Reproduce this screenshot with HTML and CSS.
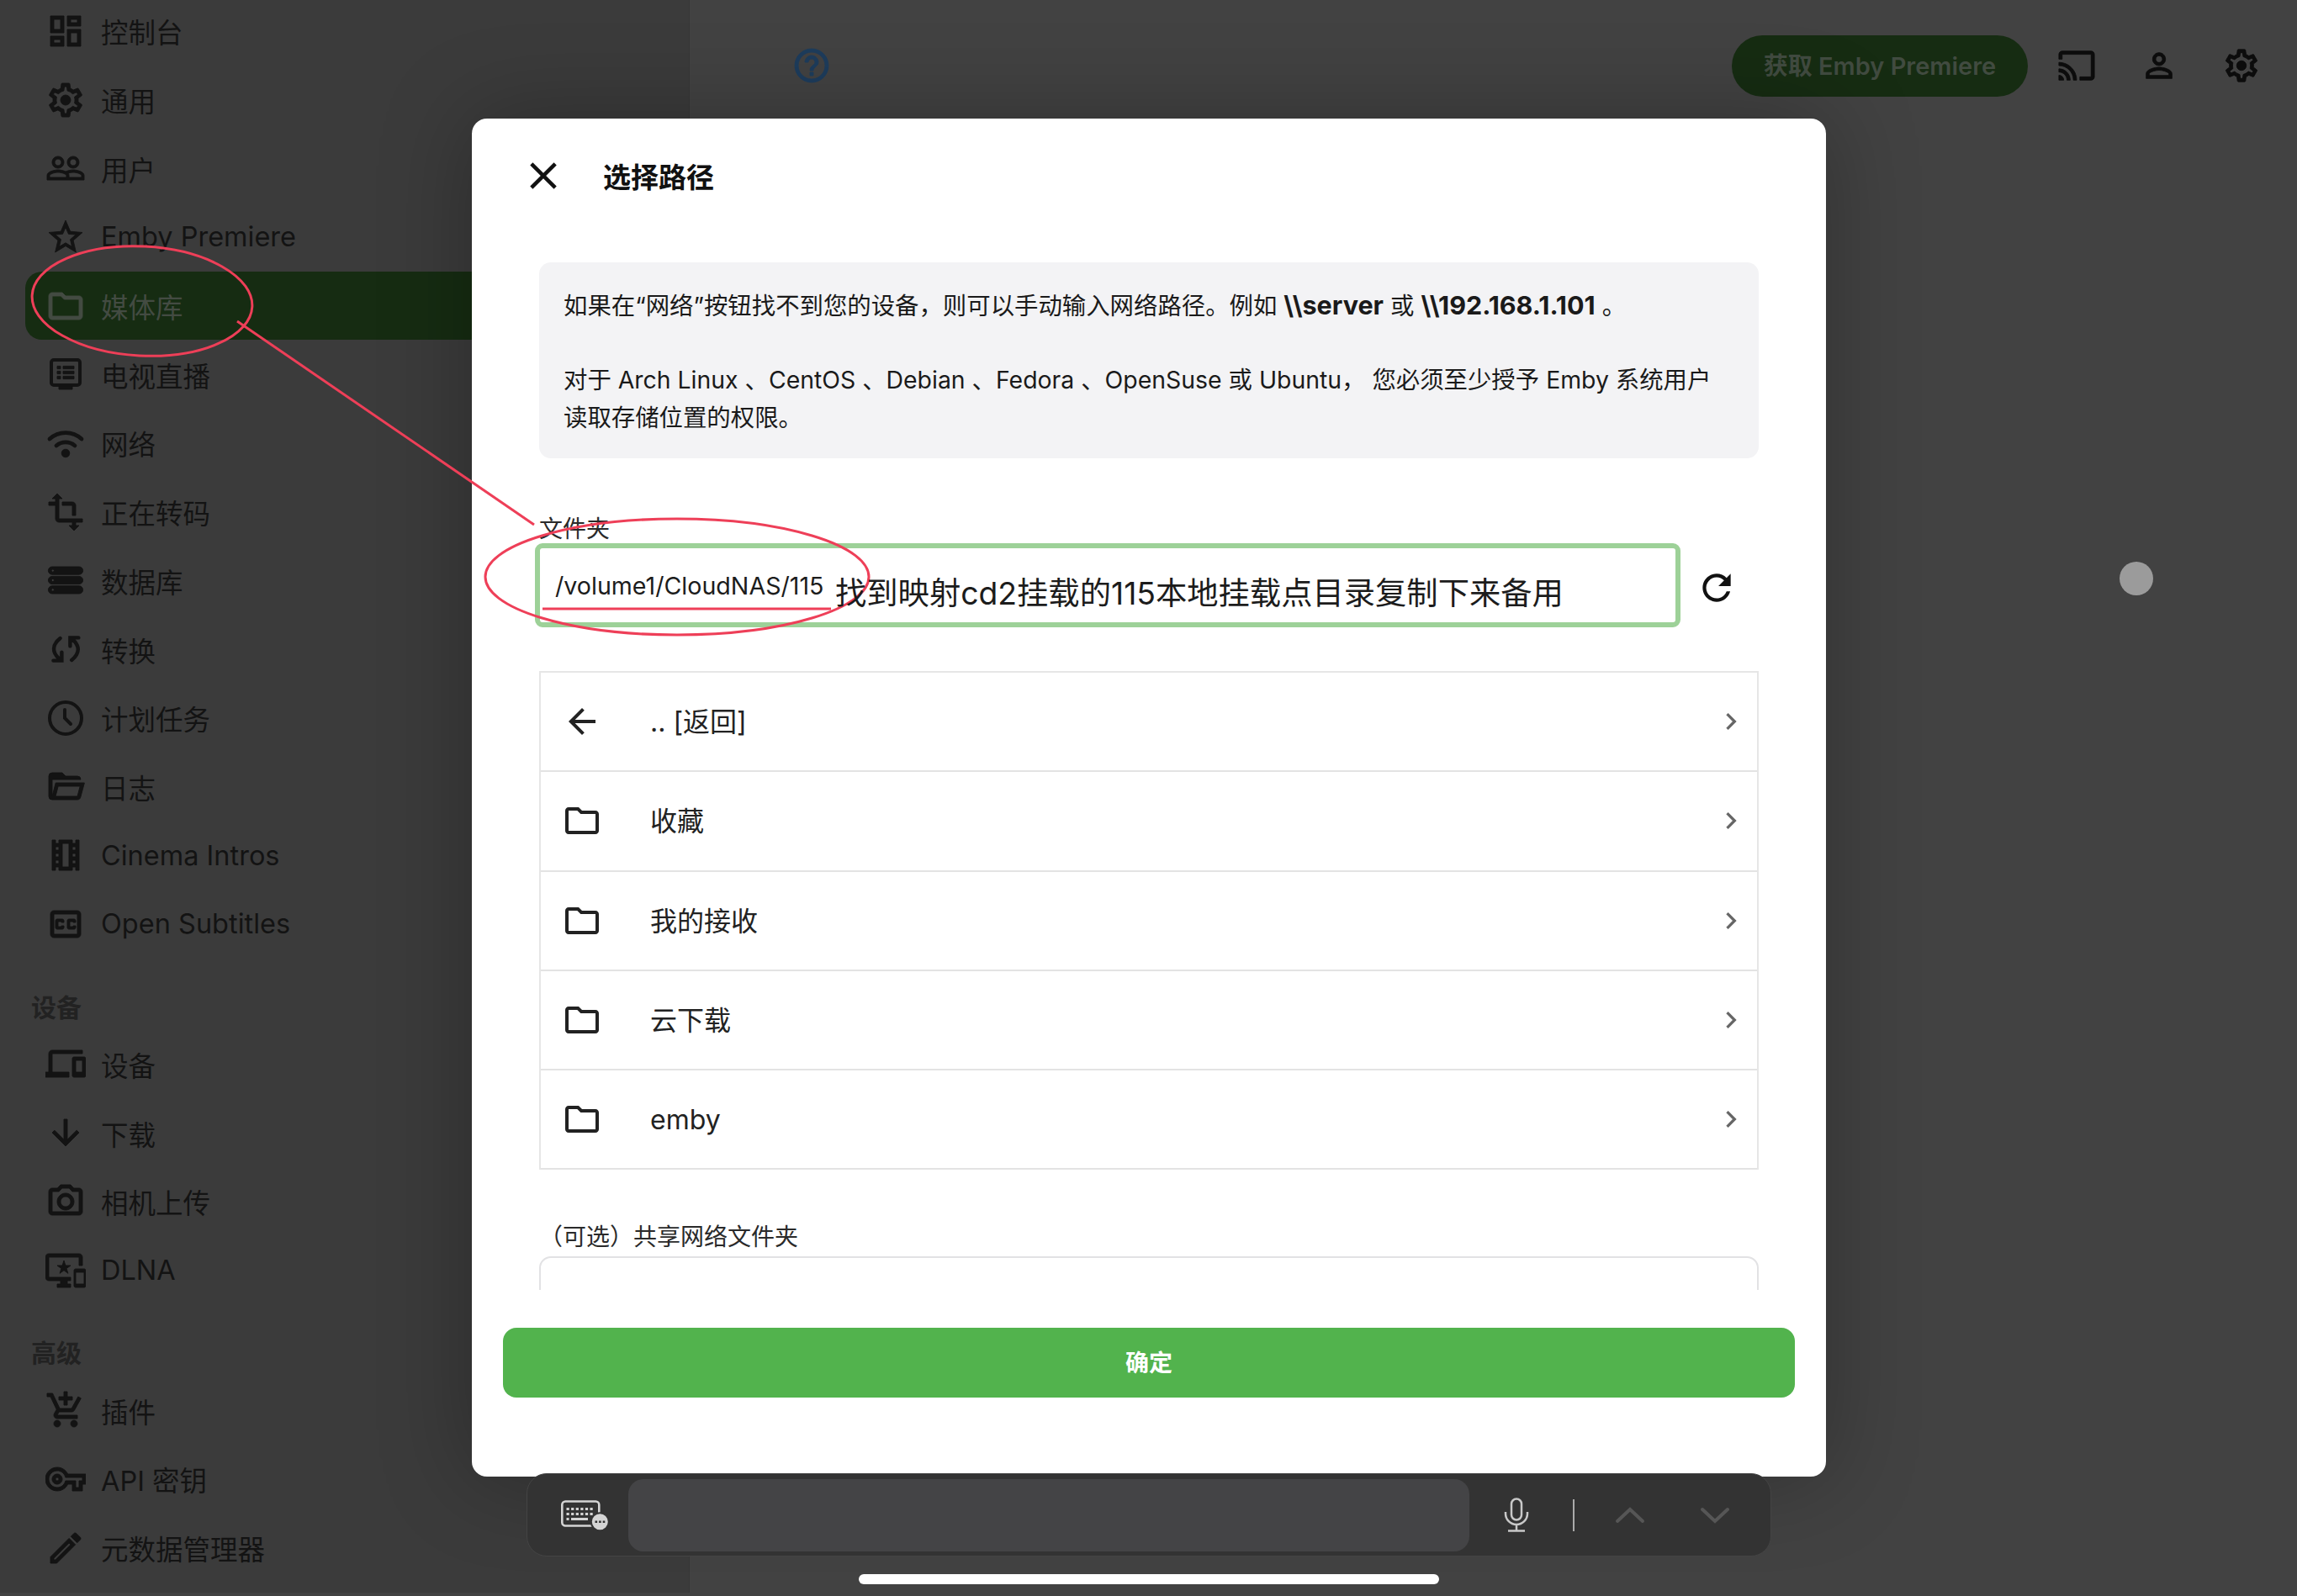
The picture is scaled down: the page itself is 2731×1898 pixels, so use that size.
FILE: index.html
```html
<!DOCTYPE html>
<html lang="zh-CN">
<head>
    <title>Emby</title>
    <link rel="stylesheet" href="styles.css">
</head>
<body>
<svg class="sprite">
    <symbol id="i-dash" viewBox="0 0 24 24"><path d="M19 5v2h-4V5h4M9 5v6H5V5h4m10 8v6h-4v-6h4M9 17v2H5v-2h4M21 3h-8v6h8V3zM11 3H3v10h8V3zm10 8h-8v10h8V11zm-10 4H3v6h8v-6z"/></symbol>
    <symbol id="i-gear" viewBox="0 0 24 24"><path d="M19.43 12.98c.04-.32.07-.64.07-.98 0-.34-.03-.66-.07-.98l2.11-1.65c.19-.15.24-.42.12-.64l-2-3.46c-.09-.16-.26-.25-.44-.25-.06 0-.12.01-.17.03l-2.49 1c-.52-.4-1.08-.73-1.69-.98l-.38-2.65C14.46 2.18 14.25 2 14 2h-4c-.25 0-.46.18-.49.42l-.38 2.65c-.61.25-1.17.59-1.69.98l-2.49-1c-.06-.02-.12-.03-.18-.03-.17 0-.34.09-.43.25l-2 3.46c-.13.22-.07.49.12.64l2.11 1.65c-.04.32-.07.65-.07.98 0 .33.03.66.07.98l-2.11 1.65c-.19.15-.24.42-.12.64l2 3.46c.09.16.26.25.44.25.06 0 .12-.01.17-.03l2.49-1c.52.4 1.08.73 1.69.98l.38 2.65c.03.24.24.42.49.42h4c.25 0 .46-.18.49-.42l.38-2.65c.61-.25 1.17-.59 1.69-.98l2.49 1c.06.02.12.03.18.03.17 0 .34-.09.43-.25l2-3.46c.12-.22.07-.49-.12-.64l-2.11-1.65zm-1.98-1.71c.04.31.05.52.05.73 0 .21-.02.43-.05.73l-.14 1.13.89.7 1.08.84-.7 1.21-1.27-.51-1.04-.42-.9.68c-.43.32-.84.56-1.25.73l-1.06.43-.16 1.13-.2 1.35h-1.4l-.19-1.35-.16-1.13-1.06-.43c-.43-.18-.83-.41-1.23-.71l-.91-.7-1.06.43-1.27.51-.7-1.21 1.08-.84.89-.7-.14-1.13c-.03-.31-.05-.54-.05-.74s.02-.43.05-.73l.14-1.13-.89-.7-1.08-.84.7-1.21 1.27.51 1.04.42.9-.68c.43-.32.84-.56 1.25-.73l1.06-.43.16-1.13.2-1.35h1.39l.19 1.35.16 1.13 1.06.43c.43.18.83.41 1.23.71l.91.7 1.06-.43 1.27-.51.7 1.21-1.07.85-.89.7.14 1.13z"/><circle cx="12" cy="12" r="3"/></symbol>
    <symbol id="i-people" viewBox="0 0 24 24"><path d="M16.5 13c-1.2 0-3.07.34-4.5 1-1.43-.67-3.3-1-4.5-1C5.33 13 1 14.08 1 16.25V19h22v-2.75c0-2.17-4.33-3.25-6.5-3.25zm-4 4.5h-10v-1.25c0-.54 2.56-1.75 5-1.75s5 1.21 5 1.75v1.25zm9 0H14v-1.25c0-.46-.2-.86-.52-1.22.88-.3 1.96-.53 3.02-.53 2.44 0 5 1.21 5 1.75v1.25zM7.5 12c1.93 0 3.5-1.57 3.5-3.5S9.43 5 7.5 5 4 6.57 4 8.5 5.57 12 7.5 12zm0-5.5c1.1 0 2 .9 2 2s-.9 2-2 2-2-.9-2-2 .9-2 2-2zm9 5.5c1.93 0 3.5-1.57 3.5-3.5S18.43 5 16.5 5 13 6.57 13 8.5s1.57 3.5 3.5 3.5zm0-5.5c1.1 0 2 .9 2 2s-.9 2-2 2-2-.9-2-2 .9-2 2-2z"/></symbol>
    <symbol id="i-star" viewBox="0 0 24 24"><path d="M22 9.24l-7.19-.62L12 2 9.19 8.63 2 9.24l5.46 4.73L5.82 21 12 17.27 18.18 21l-1.63-7.03L22 9.24zM12 15.4l-3.76 2.27 1-4.28-3.32-2.88 4.38-.38L12 6.1l1.71 4.04 4.38.38-3.32 2.88 1 4.28L12 15.4z"/></symbol>
    <symbol id="i-folder" viewBox="0 0 24 24"><path d="M9.17 6l2 2H20v10H4V6h5.17M10 4H4c-1.1 0-1.99.9-1.99 2L2 18c0 1.1.9 2 2 2h16c1.1 0 2-.9 2-2V8c0-1.1-.9-2-2-2h-8l-2-2z"/></symbol>
    <symbol id="i-tv" viewBox="0 0 24 24"><rect x="3.5" y="3.5" width="17" height="15" rx="1.5" fill="none" stroke="currentColor" stroke-width="2"/><path d="M8 21h8v-2H8zM7 7.2h2v1.6H7zM7 10.2h2v1.6H7zM7 13.2h2v1.6H7zM10.5 7.2H17v1.6h-6.5zM10.5 10.2H17v1.6h-6.5zM10.5 13.2H17v1.6h-6.5z"/></symbol>
    <symbol id="i-wifi" viewBox="0 0 24 24"><path d="M2.5 9.5a14 14 0 0 1 19 0M6.5 13.5a8.5 8.5 0 0 1 11 0" fill="none" stroke="currentColor" stroke-width="2.4" stroke-linecap="round"/><circle cx="12" cy="18" r="2.4"/></symbol>
    <symbol id="i-transform" viewBox="0 0 24 24"><path d="M22 18v-2H8V4h2L7 1 4 4h2v2H2v2h4v8c0 1.1.9 2 2 2h8v2h-2l3 3 3-3h-2v-2h4zM10 8h6v6h2V8c0-1.1-.9-2-2-2h-6v2z"/></symbol>
    <symbol id="i-storage" viewBox="0 0 24 24"><path d="M4 4h16a2 2 0 0 1 0 4.6H4A2 2 0 0 1 4 4zM4 9.7h16a2 2 0 0 1 0 4.6H4a2 2 0 0 1 0-4.6zM4 15.4h16a2 2 0 0 1 0 4.6H4a2 2 0 0 1 0-4.6zM3.6 6.3a.8.8 0 1 0 1.6 0 .8.8 0 1 0-1.6 0zM3.6 12a.8.8 0 1 0 1.6 0 .8.8 0 1 0-1.6 0zM3.6 17.7a.8.8 0 1 0 1.6 0 .8.8 0 1 0-1.6 0z" fill-rule="evenodd"/></symbol>
    <symbol id="i-sync" viewBox="0 0 24 24"><path d="M8.8 5.5C3.8 9.5 4 14 8 17.5M15.6 18.5C20.6 14.5 20.4 10 16.4 6.5M4.7 18.8h5v-5M19.7 5.2h-5v5" fill="none" stroke="currentColor" stroke-width="2.2" stroke-linecap="round"/></symbol>
    <symbol id="i-clock" viewBox="0 0 24 24"><circle cx="12" cy="12" r="9.5" fill="none" stroke="currentColor" stroke-width="2"/><path d="M11.5 7v5l3.5 3.5" fill="none" stroke="currentColor" stroke-width="2" stroke-linecap="round"/></symbol>
    <symbol id="i-open" viewBox="0 0 24 24"><path d="M6.1 10L4 18V8h17a2 2 0 0 0-2-2h-7l-2-2H4a2 2 0 0 0-2 2v12a2 2 0 0 0 2 2h15c.9 0 1.7-.6 1.9-1.5l2.3-8.5H6.1M19 18H6l1.6-6h13L19 18z"/></symbol>
    <symbol id="i-film" viewBox="0 0 24 24"><path d="M18 3v2h-2V3H8v2H6V3H4v18h2v-2h2v2h8v-2h2v2h2V3h-2zM8 17H6v-2h2v2zm0-4H6v-2h2v2zm0-4H6V7h2v2zm6 10h-4V5h4v14zm4-2h-2v-2h2v2zm0-4h-2v-2h2v2zm0-4h-2V7h2v2z"/></symbol>
    <symbol id="i-cc" viewBox="0 0 24 24"><path d="M19 4H5c-1.11 0-2 .9-2 2v12c0 1.1.89 2 2 2h14c1.1 0 2-.9 2-2V6c0-1.1-.9-2-2-2zm0 14H5V6h14v12zM7 15h3c.55 0 1-.45 1-1v-1H9.5v.5h-2v-3h2v.5H11v-1c0-.55-.45-1-1-1H7c-.55 0-1 .45-1 1v4c0 .55.45 1 1 1zm7 0h3c.55 0 1-.45 1-1v-1h-1.5v.5h-2v-3h2v.5H18v-1c0-.55-.45-1-1-1h-3c-.55 0-1 .45-1 1v4c0 .55.45 1 1 1z"/></symbol>
    <symbol id="i-devices" viewBox="0 0 24 24"><path d="M4 6h18V4H4c-1.1 0-2 .9-2 2v11H0v3h14v-3H4V6zm19 2h-6c-.55 0-1 .45-1 1v10c0 .55.45 1 1 1h6c.55 0 1-.45 1-1V9c0-.55-.45-1-1-1zm-1 9h-4v-7h4v7z"/></symbol>
    <symbol id="i-down" viewBox="0 0 24 24"><path d="M20 12l-1.41-1.41L13 16.17V4h-2v12.17l-5.58-5.59L4 12l8 8 8-8z"/></symbol>
    <symbol id="i-camera" viewBox="0 0 24 24"><path d="M20 4h-3.17L15 2H9L7.17 4H4c-1.1 0-2 .9-2 2v12c0 1.1.9 2 2 2h16c1.1 0 2-.9 2-2V6c0-1.1-.9-2-2-2zm0 14H4V6h4.05l1.83-2h4.24l1.83 2H20v12zM12 7c-2.76 0-5 2.24-5 5s2.24 5 5 5 5-2.24 5-5-2.24-5-5-5zm0 8c-1.65 0-3-1.35-3-3s1.35-3 3-3 3 1.35 3 3-1.35 3-3 3z"/></symbol>
    <symbol id="i-dlna" viewBox="0 0 24 24"><path d="M23 11.01L18 11c-.55 0-1 .45-1 1v9c0 .55.45 1 1 1h5c.55 0 1-.45 1-1v-9c0-.55-.45-.99-1-.99zM23 20h-5v-7h5v7zM20 2H2C.89 2 0 2.89 0 4v12c0 1.1.89 2 2 2h7v2H7v2h8v-2h-2v-2h2v-2H2V4h18v5h2V4c0-1.11-.9-2-2-2zm-8.03 7L11 6l-.97 3H7l2.47 1.76-.94 2.91 2.47-1.8 2.47 1.8-.94-2.91L15 9h-3.03z"/></symbol>
    <symbol id="i-cart" viewBox="0 0 24 24"><path d="M11 9h2V6h3V4h-3V1h-2v3H8v2h3v3zm-4 9c-1.1 0-1.99.9-1.99 2S5.9 22 7 22s2-.9 2-2-.9-2-2-2zm10 0c-1.1 0-1.99.9-1.99 2s.89 2 1.99 2 2-.9 2-2-.9-2-2-2zm-9.83-3.25l.03-.12.9-1.63h7.45c.75 0 1.41-.41 1.75-1.03l3.86-7.01L19.42 4h-.01l-1.1 2-2.76 5H8.53l-.13-.27L6.16 6l-.95-2-.94-2H1v2h2l3.6 7.59-1.35 2.45c-.16.28-.25.61-.25.96 0 1.1.9 2 2 2h12v-2H7.42c-.13 0-.25-.11-.25-.25z"/></symbol>
    <symbol id="i-key" viewBox="0 0 24 24"><path d="M22 19h-6v-4h-2.68c-1.14 2.42-3.6 4-6.32 4-3.86 0-7-3.14-7-7s3.14-7 7-7c2.72 0 5.17 1.58 6.32 4H24v6h-2v4zm-4-2h2v-4h2v-2H11.94l-.23-.67C11.01 8.34 9.11 7 7 7c-2.76 0-5 2.24-5 5s2.24 5 5 5c2.11 0 4.01-1.34 4.71-3.33l.23-.67H18v4zM7 15c-1.65 0-3-1.35-3-3s1.35-3 3-3 3 1.35 3 3-1.35 3-3 3zm0-4c-.55 0-1 .45-1 1s.45 1 1 1 1-.45 1-1-.45-1-1-1z"/></symbol>
    <symbol id="i-edit" viewBox="0 0 24 24"><path d="M14.06 9.02l.92.92L5.92 19H5v-.92l9.06-9.06M17.66 3c-.25 0-.51.1-.7.29l-1.83 1.83 3.75 3.75 1.83-1.83c.39-.39.39-1.02 0-1.41l-2.34-2.34c-.2-.2-.45-.29-.71-.29zm-3.6 3.19L3 17.25V21h3.75L17.81 9.94l-3.75-3.75z"/></symbol>
    <symbol id="i-close" viewBox="0 0 24 24"><path d="M19 6.41L17.59 5 12 10.59 6.41 5 5 6.41 10.59 12 5 17.59 6.41 19 12 13.41 17.59 19 19 17.59 13.41 12z"/></symbol>
    <symbol id="i-back" viewBox="0 0 24 24"><path d="M20 11H7.83l5.59-5.59L12 4l-8 8 8 8 1.41-1.41L7.83 13H20v-2z"/></symbol>
    <symbol id="i-chevron" viewBox="0 0 24 24"><path d="M10 6L8.59 7.41 13.17 12l-4.58 4.59L10 18l6-6z"/></symbol>
    <symbol id="i-refresh" viewBox="0 0 24 24"><path d="M17.65 6.35C16.2 4.9 14.21 4 12 4c-4.42 0-7.99 3.58-7.99 8s3.57 8 7.99 8c3.73 0 6.84-2.55 7.73-6h-2.08c-.82 2.33-3.04 4-5.65 4-3.31 0-6-2.69-6-6s2.69-6 6-6c1.66 0 3.14.69 4.22 1.78L13 11h7V4l-2.35 2.35z"/></symbol>
    <symbol id="i-help" viewBox="0 0 24 24"><path d="M11 18h2v-2h-2v2zm1-16C6.48 2 2 6.48 2 12s4.48 10 10 10 10-4.48 10-10S17.52 2 12 2zm0 18c-4.41 0-8-3.59-8-8s3.59-8 8-8 8 3.59 8 8-3.59 8-8 8zm0-14c-2.21 0-4 1.79-4 4h2c0-1.1.9-2 2-2s2 .9 2 2c0 2-3 1.75-3 5h2c0-2.25 3-2.5 3-5 0-2.21-1.79-4-4-4z"/></symbol>
    <symbol id="i-cast" viewBox="0 0 24 24"><path d="M21 3H3c-1.1 0-2 .9-2 2v3h2V5h18v14h-7v2h7c1.1 0 2-.9 2-2V5c0-1.1-.9-2-2-2zM1 18v3h3c0-1.66-1.34-3-3-3zm0-4v2c2.76 0 5 2.24 5 5h2c0-3.87-3.13-7-7-7zm0-4v2c4.97 0 9 4.03 9 9h2c0-6.08-4.93-11-11-11z"/></symbol>
    <symbol id="i-person" viewBox="0 0 24 24"><path d="M12 5.9c1.16 0 2.1.94 2.1 2.1s-.94 2.1-2.1 2.1S9.9 9.16 9.9 8s.94-2.1 2.1-2.1m0 9c2.97 0 6.1 1.46 6.1 2.1v1.1H5.9V17c0-.64 3.13-2.1 6.1-2.1M12 4C9.79 4 8 5.79 8 8s1.79 4 4 4 4-1.79 4-4-1.79-4-4-4zm0 9c-2.67 0-8 1.34-8 4v3h16v-3c0-2.66-5.33-4-8-4z"/></symbol>
</svg>

<div class="page">
    <nav class="sidebar">
        <a class="nav-item"><svg class="ico"><use href="#i-dash"/></svg>控制台</a>
        <a class="nav-item"><svg class="ico"><use href="#i-gear"/></svg>通用</a>
        <a class="nav-item"><svg class="ico"><use href="#i-people"/></svg>用户</a>
        <a class="nav-item"><svg class="ico"><use href="#i-star"/></svg>Emby Premiere</a>
        <a class="nav-item active"><svg class="ico"><use href="#i-folder"/></svg>媒体库</a>
        <a class="nav-item"><svg class="ico"><use href="#i-tv"/></svg>电视直播</a>
        <a class="nav-item"><svg class="ico"><use href="#i-wifi"/></svg>网络</a>
        <a class="nav-item"><svg class="ico"><use href="#i-transform"/></svg>正在转码</a>
        <a class="nav-item"><svg class="ico"><use href="#i-storage"/></svg>数据库</a>
        <a class="nav-item"><svg class="ico"><use href="#i-sync"/></svg>转换</a>
        <a class="nav-item"><svg class="ico"><use href="#i-clock"/></svg>计划任务</a>
        <a class="nav-item"><svg class="ico"><use href="#i-open"/></svg>日志</a>
        <a class="nav-item"><svg class="ico"><use href="#i-film"/></svg>Cinema Intros</a>
        <a class="nav-item"><svg class="ico"><use href="#i-cc"/></svg>Open Subtitles</a>
        <h3 class="nav-title">设备</h3>
        <a class="nav-item"><svg class="ico"><use href="#i-devices"/></svg>设备</a>
        <a class="nav-item"><svg class="ico"><use href="#i-down"/></svg>下载</a>
        <a class="nav-item"><svg class="ico"><use href="#i-camera"/></svg>相机上传</a>
        <a class="nav-item"><svg class="ico"><use href="#i-dlna"/></svg>DLNA</a>
        <h3 class="nav-title">高级</h3>
        <a class="nav-item"><svg class="ico"><use href="#i-cart"/></svg>插件</a>
        <a class="nav-item"><svg class="ico"><use href="#i-key"/></svg>API 密钥</a>
        <a class="nav-item"><svg class="ico"><use href="#i-edit"/></svg>元数据管理器</a>
    </nav>

    <main class="main">
        <header class="topbar">
            <svg class="ico help"><use href="#i-help"/></svg>
            <a class="premiere">获取 Emby Premiere</a>
            <svg class="ico"><use href="#i-cast"/></svg>
            <svg class="ico"><use href="#i-person"/></svg>
            <svg class="ico"><use href="#i-gear"/></svg>
        </header>
    </main>
</div>

<div class="touch-dot"></div>

<section class="dialog">
    <div class="dialog-head">
        <svg class="ico close"><use href="#i-close"/></svg>
        <h2>选择路径</h2>
    </div>
    <div class="dialog-body">
        <div class="info">
            <p>如果在“网络”按钮找不到您的设备，则可以手动输入网络路径。例如 <b>\\server</b> 或 <b>\\192.168.1.101</b> 。</p>
            <p>对于 Arch Linux 、CentOS 、Debian 、Fedora 、OpenSuse 或 Ubuntu， 您必须至少授予 Emby 系统用户<br>读取存储位置的权限。</p>
        </div>
        <label class="field-label">文件夹</label>
        <div class="path-row">
            <div class="path-input">/volume1/CloudNAS/115</div>
            <svg class="ico refresh"><use href="#i-refresh"/></svg>
        </div>
        <ul class="dir-list">
            <li><svg class="ico"><use href="#i-back"/></svg><span>.. [返回]</span><svg class="ico chev"><use href="#i-chevron"/></svg></li>
            <li><svg class="ico"><use href="#i-folder"/></svg><span>收藏</span><svg class="ico chev"><use href="#i-chevron"/></svg></li>
            <li><svg class="ico"><use href="#i-folder"/></svg><span>我的接收</span><svg class="ico chev"><use href="#i-chevron"/></svg></li>
            <li><svg class="ico"><use href="#i-folder"/></svg><span>云下载</span><svg class="ico chev"><use href="#i-chevron"/></svg></li>
            <li><svg class="ico"><use href="#i-folder"/></svg><span>emby</span><svg class="ico chev"><use href="#i-chevron"/></svg></li>
        </ul>
        <label class="field-label share-label">（可选）共享网络文件夹</label>
        <div class="share-input"></div>
    </div>
    <div class="dialog-foot">
        <button class="ok">确定</button>
    </div>
</section>

<!-- red marks drawn on the screenshot -->
<svg class="marks" viewBox="0 0 2731 1898">
    <ellipse cx="169" cy="358" rx="131" ry="65" transform="rotate(3 169 358)"/>
    <line x1="282" y1="382" x2="635" y2="624"/>
    <ellipse cx="805" cy="686" rx="228" ry="69"/>
    <line x1="645" y1="724" x2="988" y2="724"/>
</svg>
<div class="note">找到映射cd2挂载的115本地挂载点目录复制下来备用</div>

<div class="kb-bar">
    <svg class="kb-icon" viewBox="0 0 58 36">
        <rect x="1.3" y="1.5" width="44" height="29" rx="4" fill="none" stroke="#d4d4d4" stroke-width="2.6"/>
        <path d="M6.5 10.5H40M6.5 16.5H40" stroke="#d4d4d4" stroke-width="3.2" stroke-dasharray="3.2 2.4"/>
        <path d="M6.5 22.5h3M12 22.5h20" stroke="#d4d4d4" stroke-width="3"/>
        <circle cx="46.3" cy="25.8" r="10.5" fill="#d4d4d4" stroke="#333" stroke-width="2"/>
        <path d="M40.5 25.8h12" stroke="#333" stroke-width="2.6" stroke-dasharray="2.6 2"/>
    </svg>
    <div class="kb-field"></div>
    <svg class="kb-mic" viewBox="0 0 30 42">
        <rect x="9" y="1.5" width="12" height="25" rx="6" fill="none" stroke="#c8c8c8" stroke-width="2.5"/>
        <path d="M2 17v2a13 13 0 0 0 26 0v-2M15 32v7M5 39.5h20" fill="none" stroke="#c8c8c8" stroke-width="2.5"/>
    </svg>
    <div class="kb-sep"></div>
    <svg class="kb-arrow" viewBox="0 0 36 20"><path d="M3 17L18 3l15 14"/></svg>
    <svg class="kb-arrow" viewBox="0 0 36 20"><path d="M3 3l15 14L33 3"/></svg>
</div>
<div class="home-bar"></div>
</body>
</html>
```

FILE: styles.css
```css
* {
    box-sizing: border-box;
}

html, body {
    margin: 0;
    height: 1898px;
    overflow: hidden;
}

body {
    position: relative;
    background: #424242;
    font-family: Inter, "Noto Sans CJK SC", sans-serif;
    color: #222;
}

.sprite {
    display: none;
}

.ico {
    width: 46px;
    height: 46px;
    flex: none;
    fill: currentColor;
}

.page {
    display: flex;
    height: 1898px;
}

/* sidebar */
.sidebar {
    width: 820px;
    flex: none;
    background: #3b3b3b;
    border-right: 1px solid #373737;
    padding: 0 20px 0 30px;
    transform: translateY(-4px);
}

.nav-item {
    display: flex;
    align-items: center;
    gap: 18px;
    height: 81.7px;
    padding-left: 24px;
    border-radius: 20px;
    font-size: 32.5px;
    color: #131313;
}

.nav-item .ico {
    width: 48px;
    height: 48px;
    stroke: currentColor;
    stroke-width: .45;
}

.nav-item.active {
    background: #162c12;
    color: #434b42;
}

.nav-title {
    margin: 0 0 0 7px;
    height: 85px;
    padding-top: 38px;
    font-size: 30px;
    line-height: 40px;
    font-weight: 700;
    color: #222;
}

/* top bar */
.main {
    flex: 1;
}

.topbar {
    display: flex;
    align-items: center;
    gap: 52px;
    height: 156px;
    padding: 0 43px 0 121px;
    color: #0c0c0c;
}

.topbar .ico {
    stroke: currentColor;
    stroke-width: .45;
}

.topbar .help {
    width: 48px;
    height: 48px;
    color: #1d3c5c;
    margin-right: auto;
}

.premiere {
    width: 352px;
    height: 73px;
    margin-right: -17px;
    border-radius: 37px;
    background: #162c12;
    color: #414b40;
    font-size: 29px;
    font-weight: 600;
    line-height: 73px;
    text-align: center;
}

.touch-dot {
    position: absolute;
    left: 2520px;
    top: 668px;
    width: 40px;
    height: 40px;
    border-radius: 50%;
    background: #9b9b9b;
}

/* dialog */
.dialog {
    position: absolute;
    left: 561px;
    top: 141px;
    width: 1610px;
    height: 1615px;
    background: #fff;
    border-radius: 18px;
    box-shadow: 0 0 110px rgba(0, 0, 0, .28);
}

.dialog-head {
    display: flex;
    align-items: center;
    gap: 44px;
    height: 136px;
    padding: 0 0 0 58px;
    color: #111;
}

.dialog-head h2 {
    margin: 0;
    font-size: 33px;
    font-weight: 700;
}

.close {
    width: 54px;
    height: 54px;
}

.dialog-body {
    height: 1257px;
    padding: 35px 80px 0;
    overflow: hidden;
}

.info {
    height: 233px;
    padding: 28px 29px;
    background: #f3f3f5;
    border-radius: 14px;
    font-size: 28.4px;
    line-height: 45px;
    color: #1a1a1a;
}

.info p {
    margin: 0 0 43px;
}

.info b {
    font-weight: 700;
    font-size: 30.5px;
}

.field-label {
    display: block;
    margin-top: 64px;
    font-size: 28px;
    line-height: 40px;
    color: #2a2a2a;
}

.path-row {
    display: flex;
    align-items: center;
    gap: 18px;
    margin-left: -5px;
    margin-top: -3px;
}

.path-input {
    width: 1362px;
    height: 100px;
    padding: 0 18px;
    border: 6px solid #9dd198;
    border-radius: 9px;
    font-size: 28.6px;
    line-height: 90px;
    color: #1c1c1c;
}

.refresh {
    width: 50px;
    height: 50px;
    margin-top: 5px;
    color: #111;
}

.dir-list {
    list-style: none;
    margin: 52px 0 0;
    padding: 0;
    border: 2px solid #e6e6e6;
    border-bottom: 0;
}

.dir-list li {
    display: flex;
    align-items: center;
    height: 118.3px;
    padding: 0 11px 0 25px;
    border-bottom: 2px solid #e3e3e3;
    font-size: 32px;
    color: #222;
}

.dir-list .ico {
    width: 48px;
    height: 48px;
}

.dir-list span {
    flex: 1;
    margin-left: 57px;
    padding-bottom: 4px;
}

.dir-list li:last-child span {
    padding-bottom: 0;
}

.dir-list .chev {
    width: 40px;
    height: 40px;
    color: #666;
}

.share-label {
    margin-top: 60px;
}

.share-input {
    height: 80px;
    margin-top: 3px;
    border: 2px solid #e2e2e4;
    border-radius: 14px;
}

.dialog-foot {
    padding: 45px 37px 0;
}

.ok {
    display: block;
    width: 100%;
    height: 83px;
    padding: 0 0 3px;
    border: 0;
    border-radius: 16px;
    background: #52b34d;
    color: #fff;
    font-family: inherit;
    font-size: 28px;
    font-weight: 700;
}

/* marks over the screenshot */
.marks {
    position: absolute;
    left: 0;
    top: 0;
    width: 2731px;
    height: 1898px;
    fill: none;
    stroke: #ee3f58;
    stroke-width: 3;
    pointer-events: none;
}

.note {
    position: absolute;
    left: 993px;
    top: 682px;
    font-size: 37.3px;
    line-height: 48px;
    color: #1c1c1c;
    white-space: nowrap;
}

/* keyboard accessory bar */
.kb-bar {
    position: absolute;
    left: 626px;
    top: 1752px;
    width: 1480px;
    height: 99px;
    display: flex;
    align-items: center;
    padding: 0 0 0 40px;
    background: #333;
    border: 1px solid #444;
    border-radius: 24px;
}

.kb-icon {
    width: 58px;
    height: 36px;
    flex: none;
}

.kb-field {
    width: 1000px;
    height: 86px;
    margin-left: 22px;
    background: #444446;
    border-radius: 18px;
}

.kb-mic {
    width: 30px;
    height: 42px;
    flex: none;
    margin-left: 41px;
}

.kb-sep {
    width: 2px;
    height: 38px;
    margin-left: 52px;
    background: #aaa;
}

.kb-arrow {
    width: 36px;
    height: 20px;
    flex: none;
    margin-left: 48px;
    fill: none;
    stroke: #565656;
    stroke-width: 4;
    stroke-linecap: round;
}

.kb-arrow + .kb-arrow {
    margin-left: 65px;
}

.home-bar {
    position: absolute;
    left: 1021px;
    top: 1872px;
    width: 690px;
    height: 12px;
    border-radius: 6px;
    background: #fff;
}
```
